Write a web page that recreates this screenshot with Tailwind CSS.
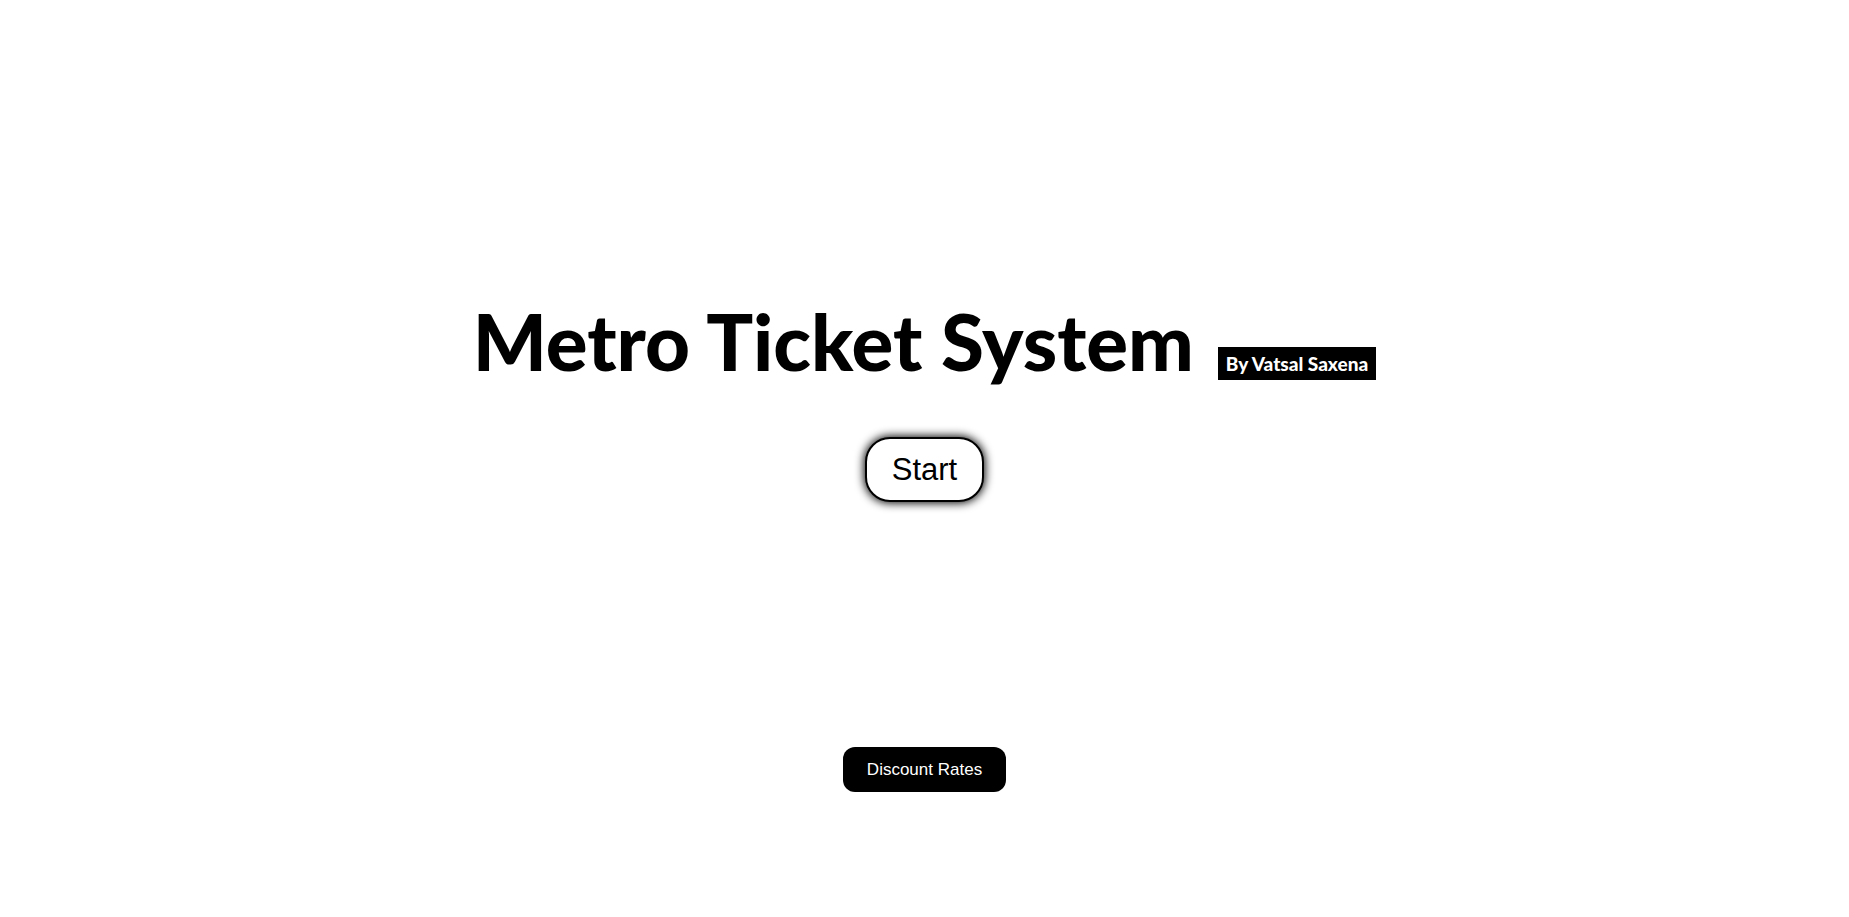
<!DOCTYPE html>
<html lang="en">
<head>
<meta charset="utf-8">
<meta name="viewport" content="width=device-width, initial-scale=1">
<title>Metro Ticket System</title>
<script src="https://cdn.jsdelivr.net/npm/@tailwindcss/browser@4"></script>
</head>
<body class="bg-white text-black">
<main class="flex min-h-screen flex-col items-center justify-center pt-[172px]">
  <h1 class="flex flex-wrap items-baseline justify-center gap-6 font-['Gill_Sans','Gill_Sans_MT',Lato,sans-serif] text-[78px] leading-[88px] font-black">
    <span>Metro Ticket System</span>
    <span class="bg-black px-2 py-1 text-[19px] leading-[25px] text-white">By Vatsal Saxena</span>
  </h1>
  <button type="button" class="mt-[52px] rounded-[25px] border-2 border-black bg-white px-[25px] py-3 font-['Liberation_Sans',Arial,sans-serif] text-[31px] leading-[37px] shadow-[0_0_10px_1px_#000]">Start</button>
  <button type="button" class="mt-[245px] rounded-xl bg-black px-6 py-3 font-['Liberation_Sans',Arial,sans-serif] text-[17px] leading-[21px] text-white">Discount Rates</button>
</main>
</body>
</html>
